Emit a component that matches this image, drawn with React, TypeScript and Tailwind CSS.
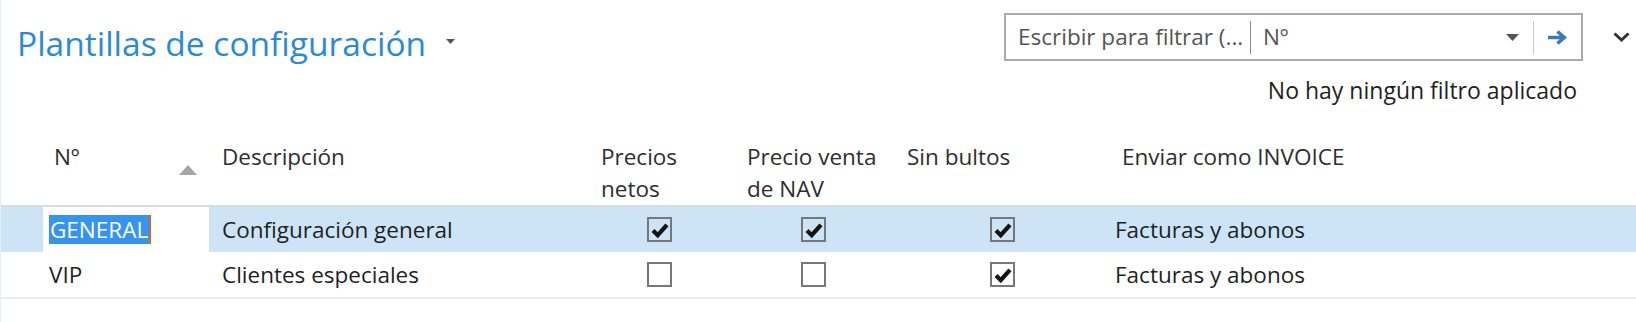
import React from 'react';

type Row = {
  no: string;
  desc: string;
  netos: boolean;
  nav: boolean;
  bultos: boolean;
  invoice: string;
  selected: boolean;
};

const rows: Row[] = [
  { no: 'GENERAL', desc: 'Configuración general', netos: true, nav: true, bultos: true, invoice: 'Facturas y abonos', selected: true },
  { no: 'VIP', desc: 'Clientes especiales', netos: false, nav: false, bultos: true, invoice: 'Facturas y abonos', selected: false },
];

const grid = 'grid grid-cols-[42px_166px_382px_146px_160px_208px_1fr]';

const CheckBox = ({ checked }: { checked: boolean }) => (
  <span className="flex h-[25px] w-[25px] items-center justify-center border-2 border-[#777]">
    {checked && (
      <svg viewBox="0 0 16 16" className="h-[18px] w-[18px]">
        <path d="M1.8 8.4 L6 12.6 L14.2 3.4" fill="none" stroke="#141414" strokeWidth="3.8" strokeLinejoin="miter" />
      </svg>
    )}
  </span>
);

export default function App() {
  return (
    <div
      className="h-[322px] w-[1636px] overflow-hidden border-l border-[#e4eff9] bg-white text-[22.5px] text-[#1f1f1f]"
      style={{ fontFamily: '"Open Sans", "Noto Sans", Arial, sans-serif' }}
    >
      {/* Title + filter */}
      <div className="flex items-start pl-[16px] pr-[6px] pt-[13px]">
        <div className="mt-[10px] flex items-center">
          <h1 className="text-[33.5px] leading-[40px] text-[#2b8ad6]">Plantillas de configuración</h1>
          <svg viewBox="0 0 9 5" className="mb-[4px] ml-[20px] h-[5px] w-[9px]">
            <path d="M0 0 H9 L4.5 5 Z" fill="#555" />
          </svg>
        </div>
        <div className="flex-1" />
        <div className="flex h-[48px] w-[579px] items-center border-2 border-[#ababab] text-[#555]">
          <span className="w-[244px] truncate whitespace-nowrap pl-[12px]">Escribir para filtrar (...</span>
          <span className="h-[33px] w-px bg-[#8c8c8c]" />
          <span className="flex-1 pl-[12px]">Nº</span>
          <svg viewBox="0 0 13 7" className="h-[7px] w-[13px]">
            <path d="M0 0 H13 L6.5 7 Z" fill="#555" />
          </svg>
          <span className="ml-[14px] h-[33px] w-px bg-[#c8c8c8]" />
          <svg viewBox="0 0 21 15" className="ml-[13px] mr-[13px] h-[15px] w-[21px]">
            <path d="M1 7.5 H17 M10.5 1.5 L17.3 7.5 L10.5 13.5" fill="none" stroke="#3a7bbf" strokeWidth="3.6" />
          </svg>
        </div>
        <div className="ml-[30px] mt-[19px] flex h-[8px] w-[17px]">
          <svg viewBox="0 0 17 10" className="h-[10px] w-[17px]">
            <path d="M1.5 1.5 L8.5 8 L15.5 1.5" fill="none" stroke="#333" strokeWidth="3" />
          </svg>
        </div>
      </div>

      <div className="mt-[13px] flex justify-end pr-[59px] text-[23px] leading-[28px]">
        No hay ningún filtro aplicado
      </div>

      {/* Table header */}
      <div className={`${grid} mt-[36px] h-[67px] border-b-2 border-[#dcdcdc] leading-[32px] text-[#2e2e2e]`}>
        <div />
        <div className="flex pl-[11px] pt-[1px]">
          <span>Nº</span>
          <svg viewBox="0 0 18 10" className="ml-auto mr-[12px] mt-[24px] h-[10px] w-[18px]">
            <path d="M0 10 L9 0 L18 10 Z" fill="#a6a6a6" />
          </svg>
        </div>
        <div className="pl-[13px] pt-[1px]">Descripción</div>
        <div className="pl-[10px] pt-[1px]">Precios<br />netos</div>
        <div className="pl-[10px] pt-[1px]">Precio venta<br />de NAV</div>
        <div className="pl-[10px] pt-[1px]">Sin bultos</div>
        <div className="pl-[17px] pt-[1px]">Enviar como INVOICE</div>
      </div>

      {/* Rows */}
      <div className="border-b-2 border-[#ececec]">
        {rows.map((r) => (
          <div key={r.no} className={`${grid} h-[45px] items-center ${r.selected ? 'bg-[#cde4f6]' : 'bg-white'}`}>
            <div />
            <div className={`flex h-full items-center pl-[6px] ${r.selected ? 'bg-white' : ''}`}>
              {r.selected ? (
                <span className="flex h-[29px] items-center bg-[#3594f2] pl-[1px] text-white">
                  {r.no}
                  <span className="ml-[1px] h-[29px] w-[2px] bg-[#d4691e]" />
                </span>
              ) : (
                <span>{r.no}</span>
              )}
            </div>
            <div className="pl-[13px]">{r.desc}</div>
            <div className="flex pl-[56px]"><CheckBox checked={r.netos} /></div>
            <div className="flex pl-[64px]"><CheckBox checked={r.nav} /></div>
            <div className="flex pl-[93px]"><CheckBox checked={r.bultos} /></div>
            <div className="pl-[10px]">{r.invoice}</div>
          </div>
        ))}
      </div>
    </div>
  );
}
